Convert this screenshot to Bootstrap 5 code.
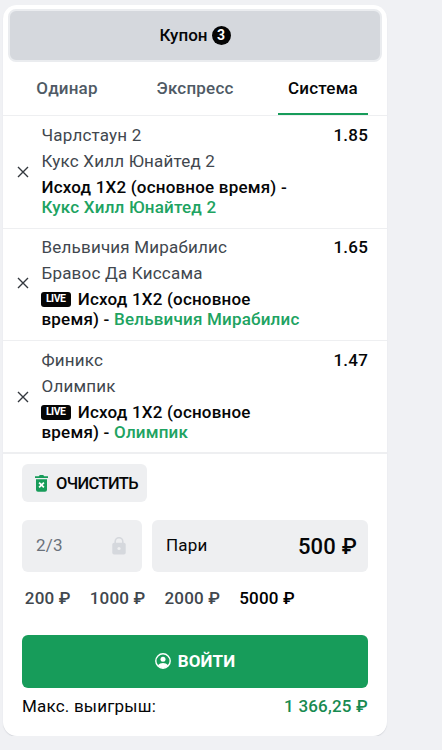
<!DOCTYPE html>
<html lang="ru">
<head>
<meta charset="utf-8">
<meta name="viewport" content="width=device-width, initial-scale=1">
<title>Купон</title>
<link href="https://cdn.jsdelivr.net/npm/bootstrap@5.3.0/dist/css/bootstrap.min.css" rel="stylesheet">
<style>
body{background:#f0f1f4;font-family:Roboto,sans-serif;font-size:17px;line-height:20px;letter-spacing:.2px;color:#050607;overflow:hidden}
.coupon{width:384px;height:731px;margin:5px 0 0 3px;border-radius:14px;background:#fff;box-shadow:0 1px 1px #d5d7dc}
.coupon-head{height:53px;margin:4px 5px 0;background:#d5d8dd;border:2px solid #eaecef;border-radius:8px;font-weight:500;letter-spacing:0}
.coupon-title{padding-bottom:2px}
.coupon-count{width:19px;height:19px;border-radius:50%;background:#050505;color:#fff;font-size:14px;font-weight:700;line-height:19px;letter-spacing:0}
.tabs{height:54px;padding:0 19px;border-bottom:1px solid #eeeff1;font-weight:500;color:#4f5a65}
.tab{width:90px;height:53px;line-height:53px}
.tab-on{color:#050607;border-bottom:2px solid #179c5a}
.bet{height:112.5px;border-bottom:1px solid #eeeff1;padding:9px 19px 0 0}
.bet-mid{padding-top:8.4px}
.bet-last{border-bottom-width:2px}
.bet-close{width:38.5px;height:93px;padding-left:.5px;flex:none}
.team{color:#41474e;margin-bottom:6px}
.outcome{font-weight:500;width:265px}
.green{color:#20a361}
.odd{font-weight:500}
.live{display:inline-block;width:30px;height:15px;border-radius:3px;background:#050505;color:#fff;font-size:10.5px;font-weight:700;line-height:14px;letter-spacing:-.5px;text-align:center;vertical-align:3px;margin:-4px 7px 0 -.8px}
.foot{padding:10px 19px 0}
.clear-btn{width:125px;height:38px;padding:2px 0 0 4px;border-radius:6px;background:#eeeff1;font-size:16.5px;font-weight:500;letter-spacing:-.6px}
.fields{margin-top:18px;gap:10px}
.field{height:52px;border-radius:6px;background:#eeeff1}
.field-text{padding-bottom:2px}
.sys{width:120px;padding:0 16px 0 14px;color:#6a727b}
.pari{padding:0 11px 0 14px}
.sum{font-size:22px;font-weight:500;padding-top:3px}
.quick{gap:19px;margin-top:16px;padding-left:2.8px;font-weight:500;color:#41474e}
.login{height:53px;margin-top:27px;border-radius:6px;background:#179c5a;color:#fff;font-weight:700;letter-spacing:.1px}
.login-text{margin-left:7px}
.win{margin-top:8px}
.win-sum{font-weight:500;color:#178a50}
</style>
<script src="https://cdn.jsdelivr.net/npm/bootstrap@5.3.0/dist/js/bootstrap.bundle.min.js"></script>
</head>
<body>
<svg class="d-none"><symbol id="close" viewBox="0 0 12 12"><path d="M1 1l10 10M11 1L1 11" fill="none" stroke="#33383e" stroke-width="1.4"/></symbol></svg>
<main class="coupon d-flex flex-column">
  <div class="coupon-head d-flex align-items-center justify-content-center flex-shrink-0"><span class="coupon-title">Купон</span><span class="coupon-count text-center ms-1">3</span></div>
  <div class="tabs d-flex justify-content-between text-center flex-shrink-0"><div class="tab">Одинар</div><div class="tab">Экспресс</div><div class="tab tab-on">Система</div></div>
  <section class="bet d-flex">
    <div class="bet-close d-flex align-items-center justify-content-center"><svg width="12" height="12"><use href="#close"/></svg></div>
    <div class="flex-grow-1">
      <div class="d-flex justify-content-between"><span class="team">Чарлстаун 2</span><span class="odd">1.85</span></div>
      <div class="team">Кукс Хилл Юнайтед 2</div>
      <div class="outcome">Исход 1X2 (основное время) - <span class="green">Кукс Хилл Юнайтед 2</span></div>
    </div>
  </section>
  <section class="bet bet-mid d-flex">
    <div class="bet-close d-flex align-items-center justify-content-center"><svg width="12" height="12"><use href="#close"/></svg></div>
    <div class="flex-grow-1">
      <div class="d-flex justify-content-between"><span class="team">Вельвичия Мирабилис</span><span class="odd">1.65</span></div>
      <div class="team">Бравос Да Киссама</div>
      <div class="outcome"><span class="live">LIVE</span>Исход 1X2 (основное время) - <span class="green">Вельвичия Мирабилис</span></div>
    </div>
  </section>
  <section class="bet bet-last d-flex">
    <div class="bet-close d-flex align-items-center justify-content-center"><svg width="12" height="12"><use href="#close"/></svg></div>
    <div class="flex-grow-1">
      <div class="d-flex justify-content-between"><span class="team">Финикс</span><span class="odd">1.47</span></div>
      <div class="team">Олимпик</div>
      <div class="outcome"><span class="live">LIVE</span>Исход 1X2 (основное время) - <span class="green">Олимпик</span></div>
    </div>
  </section>
  <div class="foot">
    <div class="clear-btn d-flex align-items-center justify-content-center gap-2">
      <svg width="13" height="17" viewBox="0 0 13 17"><path d="M0 1.3h3.8L4.8 0h3.4l1 1.3H13v1.8H0zM1 4.3h11v10.4q0 2-2 2H3q-2 0-2-2z" fill="#179c5a"/><path d="M4.1 7.6l4.8 4.8M8.9 7.6l-4.8 4.8" stroke="#fff" stroke-width="1.7"/></svg>
      <span>ОЧИСТИТЬ</span>
    </div>
    <div class="fields d-flex">
      <div class="field sys d-flex align-items-center justify-content-between"><span class="field-text">2/3</span>
        <svg width="14" height="18" viewBox="0 0 14 18"><path d="M3.2 6V4.5a3.8 3.8 0 0 1 7.6 0V6" fill="none" stroke="#d5d8dd" stroke-width="1.6"/><rect x=".3" y="5.8" width="13.4" height="11.7" rx="1.8" fill="#d5d8dd"/><circle cx="7" cy="11.5" r="1.6" fill="#eeeff1"/></svg>
      </div>
      <div class="field pari d-flex flex-grow-1 align-items-center justify-content-between"><span class="field-text">Пари</span><span class="sum">500 ₽</span></div>
    </div>
    <div class="quick d-flex"><span>200 ₽</span><span>1000 ₽</span><span>2000 ₽</span><span class="text-black">5000 ₽</span></div>
    <div class="login d-flex align-items-center justify-content-center">
      <svg width="16" height="16" viewBox="0 0 16 16"><circle cx="8" cy="8" r="7.2" fill="none" stroke="#fff" stroke-width="1.4"/><circle cx="8" cy="6.2" r="2.5" fill="#fff"/><path d="M2.7 12.3Q5 10 8 10t5.3 2.3Q11 15.2 8 15.2t-5.3-2.9z" fill="#fff"/></svg>
      <span class="login-text">ВОЙТИ</span>
    </div>
    <div class="win d-flex justify-content-between"><span>Макс. выигрыш:</span><span class="win-sum">1 366,25 ₽</span></div>
  </div>
</main>
</body>
</html>
